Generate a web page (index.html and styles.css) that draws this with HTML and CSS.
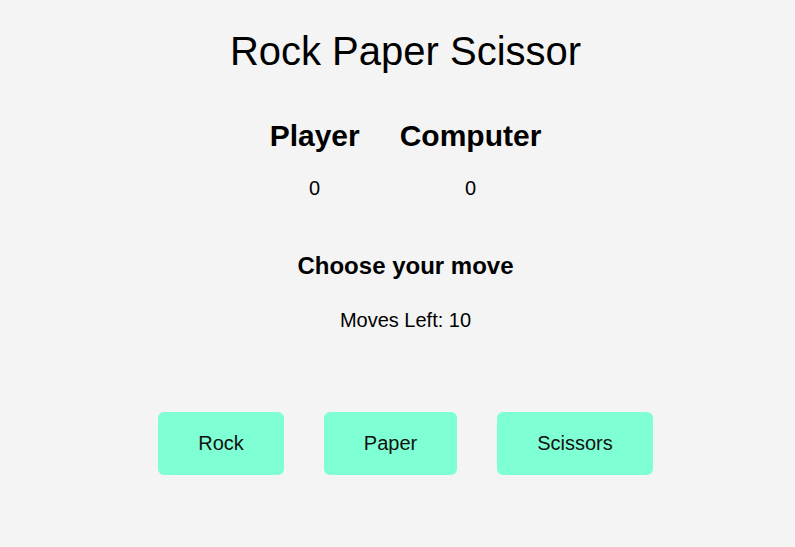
FILE: index.html
```html
<!DOCTYPE html>
<html lang="en">
<head>
<meta charset="utf-8">
<title>Rock Paper Scissor</title>
<link rel="stylesheet" href="styles.css">
</head>
<body>
<main class="game">
  <h1 class="title">Rock Paper Scissor</h1>
  <section class="scoreboard">
    <div class="score-col">
      <h2 class="score-name">Player</h2>
      <p class="score-value">0</p>
    </div>
    <div class="score-col">
      <h2 class="score-name">Computer</h2>
      <p class="score-value">0</p>
    </div>
  </section>
  <h3 class="prompt">Choose your move</h3>
  <p class="moves-left">Moves Left: 10</p>
  <div class="options">
    <button class="option">Rock</button>
    <button class="option">Paper</button>
    <button class="option">Scissors</button>
  </div>
</main>
</body>
</html>
```
FILE: styles.css
```css
html, body {
  margin: 0;
  padding: 0;
  background: #f4f4f4;
}
body {
  font-family: "Liberation Sans", Arial, sans-serif;
  color: #000;
  padding-left: 16px;
}
.game {
  display: flex;
  flex-direction: column;
  align-items: center;
  padding-top: 28px;
}
.title {
  margin: 0;
  font-size: 40px;
  line-height: 46px;
  font-weight: normal;
}
.scoreboard {
  display: flex;
  gap: 40px;
  margin-top: 43.5px;
}
.score-col {
  display: flex;
  flex-direction: column;
  align-items: center;
}
.score-name {
  margin: 0;
  font-size: 30px;
  line-height: 35px;
  font-weight: bold;
}
.score-value {
  margin: 24.5px 0 0;
  font-size: 20px;
  line-height: 23px;
}
.prompt {
  margin: 52px 0 0;
  font-size: 24px;
  line-height: 28px;
  font-weight: bold;
}
.moves-left {
  margin: 29px 0 0;
  font-size: 20px;
  line-height: 23px;
}
.options {
  display: flex;
  gap: 40px;
  margin-top: 80px;
}
.option {
  border: none;
  border-radius: 6px;
  background: #7fffd4;
  color: #111;
  font-family: "Liberation Sans", Arial, sans-serif;
  font-size: 20px;
  line-height: 23px;
  padding: 20px 40px;
}
```
